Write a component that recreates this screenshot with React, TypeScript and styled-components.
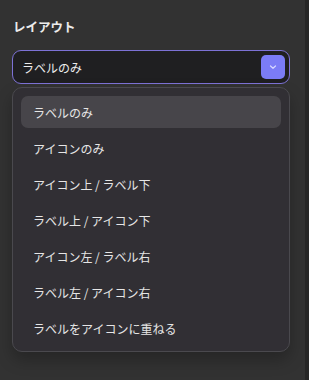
import React from "react";
import styled, { createGlobalStyle } from "styled-components";

const Global = createGlobalStyle`
  html, body { margin: 0; padding: 0; background: #323232; }
  body { font-family: "Noto Sans CJK JP", "Noto Sans", sans-serif; }
  * { box-sizing: border-box; }
`;

const Page = styled.div`
  display: flex;
  width: 309px;
  height: 380px;
  overflow: hidden;
`;

const Panel = styled.div`
  flex: 1;
  padding: 17px 15px 0 12px;
  display: flex;
  flex-direction: column;
`;

const Edge = styled.div`
  width: 4px;
  background: #262626;
`;

const Title = styled.div`
  font-size: 12.5px;
  font-weight: 700;
  color: #ececec;
  line-height: 20px;
  padding-left: 1px;
  margin-bottom: 13px;
`;

const Select = styled.div`
  height: 34px;
  border: 1.5px solid #7d72d6;
  border-radius: 9px;
  background: #1f1f21;
  display: flex;
  align-items: center;
  justify-content: space-between;
  padding: 0 4px 0 9px;
  font-size: 12px;
  color: #ececec;
`;

const Trigger = styled.div`
  width: 24px;
  height: 24px;
  border-radius: 5px;
  background: #7b7cf6;
  display: flex;
  align-items: center;
  justify-content: center;
`;

const Menu = styled.div`
  margin-top: 3px;
  border: 1px solid #4a494e;
  border-radius: 10px;
  background: #312f34;
  padding: 8px 8px 7px;
  display: flex;
  flex-direction: column;
  gap: 4px;
  box-shadow: 0 8px 16px rgba(0, 0, 0, 0.25);
`;

const Item = styled.div<{ $active?: boolean }>`
  height: 32px;
  border-radius: 7px;
  background: ${(p) => (p.$active ? "#47454a" : "transparent")};
  display: flex;
  align-items: center;
  padding-left: 12px;
  font-size: 12px;
  color: #e6e6e6;
`;

const items = [
  "ラベルのみ",
  "アイコンのみ",
  "アイコン上 / ラベル下",
  "ラベル上 / アイコン下",
  "アイコン左 / ラベル右",
  "ラベル左 / アイコン右",
  "ラベルをアイコンに重ねる",
];

export default function App() {
  return (
    <>
      <Global />
      <Page>
        <Panel>
          <Title>レイアウト</Title>
          <Select>
            <span>ラベルのみ</span>
            <Trigger>
              <svg width="8" height="6" viewBox="0 0 8 6" fill="none">
                <path d="M1.5 2 L4 4.3 L6.5 2" stroke="#d8d8ff" strokeWidth="1.2" strokeLinecap="round" strokeLinejoin="round" />
              </svg>
            </Trigger>
          </Select>
          <Menu>
            {items.map((t, i) => (
              <Item key={t} $active={i === 0}>
                {t}
              </Item>
            ))}
          </Menu>
        </Panel>
        <Edge />
      </Page>
    </>
  );
}
